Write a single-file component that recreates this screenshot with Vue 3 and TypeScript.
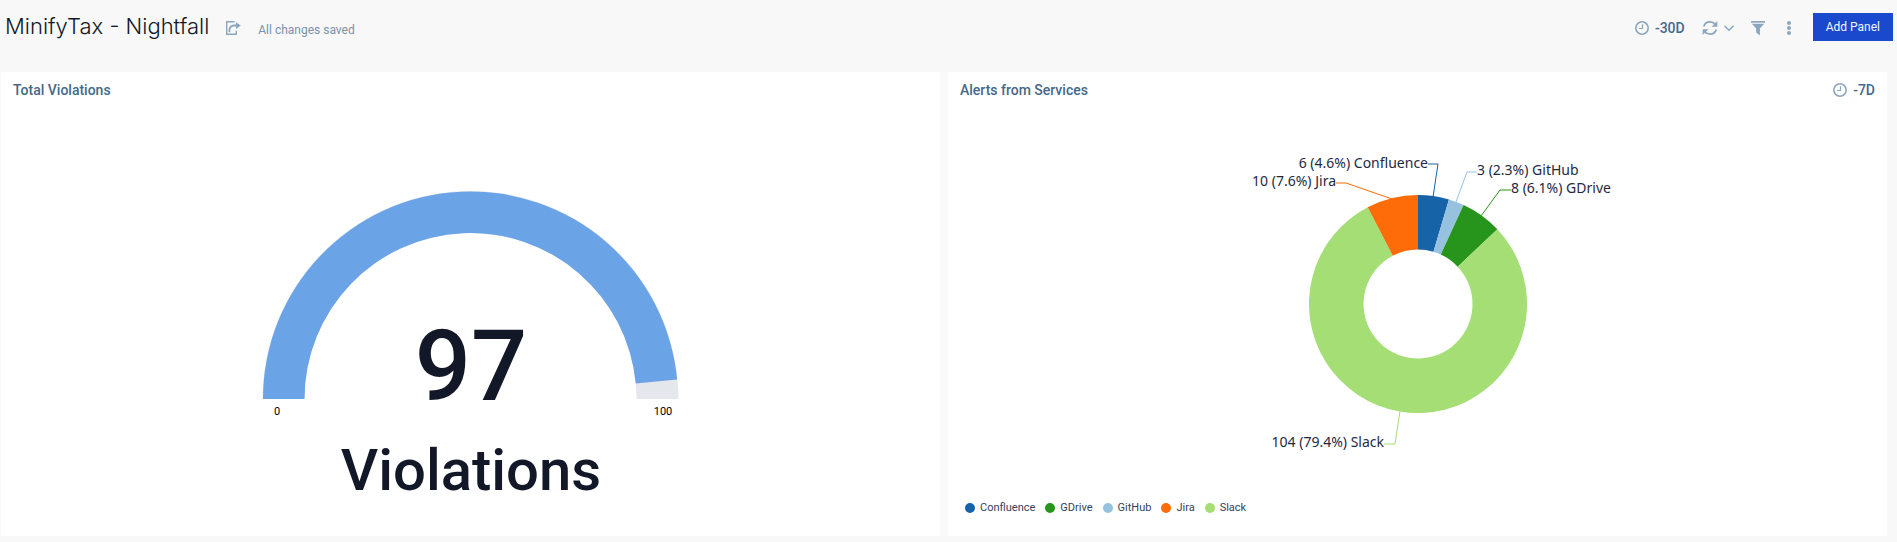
<script setup lang="ts">
interface Slice {
  name: string
  count: number
  color: string
  leader: string
  labelX: number
  labelY: number
  anchor: 'start' | 'end'
}

const gauge = { value: 97, max: 100, unit: 'Violations' }

const slices: Slice[] = [
  { name: 'Confluence', count: 6, color: '#1663a8', leader: '485,89 490,56 480,56', labelX: 480, labelY: 60, anchor: 'end' },
  { name: 'GitHub', count: 3, color: '#97c2df', leader: '508,94 519,64 529,64', labelX: 529, labelY: 67, anchor: 'start' },
  { name: 'GDrive', count: 8, color: '#27951b', leader: '533,108 552,82 563,82', labelX: 563, labelY: 85, anchor: 'start' },
  { name: 'Slack', count: 104, color: '#a4de75', leader: '452,303 447,336 436,336', labelX: 436, labelY: 339, anchor: 'end' },
  { name: 'Jira', count: 10, color: '#fd6c08', leader: '444,91 398,75 388,75', labelX: 388, labelY: 78, anchor: 'end' },
]

const total = slices.reduce((sum, s) => sum + s.count, 0)
const legend = [...slices].sort((a, b) => a.name.localeCompare(b.name))

/* Ring segment; angles are in degrees, clockwise from twelve o'clock. */
function ring(cx: number, cy: number, outer: number, inner: number, from: number, to: number): string {
  const point = (r: number, deg: number) => {
    const a = (deg * Math.PI) / 180
    return `${(cx + r * Math.sin(a)).toFixed(2)} ${(cy - r * Math.cos(a)).toFixed(2)}`
  }
  const large = to - from > 180 ? 1 : 0
  return `M${point(outer, from)}A${outer} ${outer} 0 ${large} 1 ${point(outer, to)}L${point(inner, to)}A${inner} ${inner} 0 ${large} 0 ${point(inner, from)}Z`
}

const gaugeTrack = ring(469.5, 291, 208, 166, -90, 90)
const gaugeFill = ring(469.5, 291, 207.5, 166, -90, -90 + (180 * gauge.value) / gauge.max)

let cursor = 0
const arcs = slices.map((s) => {
  const from = (cursor / total) * 360
  cursor += s.count
  return {
    ...s,
    path: ring(470, 196, 109, 54.5, from, (cursor / total) * 360),
    label: `${s.count} (${((s.count / total) * 100).toFixed(1)}%) ${s.name}`,
  }
})
</script>

<template>
  <div class="dashboard">
    <header class="topbar">
      <h1>MinifyTax - Nightfall</h1>
      <button class="icon-btn share" type="button" aria-label="Share">
        <svg width="16" height="16" viewBox="0 0 16 16" fill="none" stroke="currentColor" stroke-width="1.4">
          <path d="M9.5 1.7H1.7v12.6h9.6v-3.6" />
          <path d="M4.4 12.3V10.4c0-3 1.6-4.9 4.6-4.9h2.6" stroke-width="1.8" />
          <path d="M11 2.2L15.8 5.5 11 8.9z" fill="currentColor" stroke="none" />
        </svg>
      </button>
      <span class="status">All changes saved</span>

      <div class="tools">
        <button class="icon-btn range" type="button">
          <svg width="14" height="14" viewBox="0 0 14 14" fill="none" stroke="currentColor">
            <circle cx="7" cy="7" r="6.2" stroke-width="1.6" />
            <path d="M7.5 3.2v4.3H4" stroke-width="1.2" />
          </svg>
          <span>-30D</span>
        </button>
        <button class="icon-btn" type="button" aria-label="Refresh">
          <svg width="16" height="16" viewBox="0 0 16 16" fill="none" stroke="currentColor" stroke-width="1.8">
            <path d="M1.8 6.6C2.6 3.6 5 1.9 8 1.9c2.1 0 3.9.9 5.2 2.5" />
            <path d="M14.2 9.4C13.4 12.4 11 14.1 8 14.1c-2.1 0-3.9-.9-5.2-2.5" />
            <path d="M15.3 1v5.7H9.6z" fill="currentColor" stroke="none" />
            <path d="M.7 15V9.3h5.7z" fill="currentColor" stroke="none" />
          </svg>
          <svg width="10" height="10" viewBox="0 0 10 10" fill="none" stroke="currentColor" stroke-width="1.4">
            <path d="M.5 2.7L5 7.3 9.5 2.7" />
          </svg>
        </button>
        <button class="icon-btn" type="button" aria-label="Filter">
          <svg width="14" height="16" viewBox="0 0 14 16" fill="currentColor">
            <path d="M0 1h14v1.7H0z" />
            <path d="M.8 3.7h12.4L8.9 8.6v6.9L5.2 12.6V8.6z" />
          </svg>
        </button>
        <button class="icon-btn" type="button" aria-label="More actions">
          <svg width="14" height="14" viewBox="0 0 14 14" fill="currentColor">
            <circle cx="7" cy="2" r="2" />
            <circle cx="7" cy="7" r="2" />
            <circle cx="7" cy="12" r="2" />
          </svg>
        </button>
        <button class="primary" type="button">Add Panel</button>
      </div>
    </header>

    <main class="panels">
      <section class="panel">
        <header class="panel-head"><h2>Total Violations</h2></header>
        <svg class="chart" viewBox="0 0 939 428" role="img" aria-label="Violations gauge">
          <path :d="gaugeTrack" fill="#e4e7ec" />
          <path :d="gaugeFill" fill="#6ba3e7" />
          <text class="value" x="470" y="292">{{ gauge.value }}</text>
          <text class="unit" x="470" y="382">{{ gauge.unit }}</text>
          <text class="tick" x="276" y="307">0</text>
          <text class="tick" x="662" y="307">{{ gauge.max }}</text>
        </svg>
      </section>

      <section class="panel">
        <header class="panel-head">
          <h2>Alerts from Services</h2>
          <button class="icon-btn range" type="button">
            <svg width="14" height="14" viewBox="0 0 14 14" fill="none" stroke="currentColor">
              <circle cx="7" cy="7" r="6.2" stroke-width="1.6" />
              <path d="M7.5 3.2v4.3H4" stroke-width="1.2" />
            </svg>
            <span>-7D</span>
          </button>
        </header>
        <svg class="chart" viewBox="0 0 939 384" role="img" aria-label="Alerts by service">
          <g v-for="arc in arcs" :key="arc.name">
            <path :d="arc.path" :fill="arc.color" />
            <polyline :points="arc.leader" fill="none" :stroke="arc.color" />
            <text class="label" :x="arc.labelX" :y="arc.labelY" :text-anchor="arc.anchor">{{ arc.label }}</text>
          </g>
        </svg>
        <ul class="legend">
          <li v-for="item in legend" :key="item.name">
            <i class="dot" :style="{ backgroundColor: item.color }"></i>{{ item.name }}
          </li>
        </ul>
      </section>
    </main>
  </div>
</template>

<style>
body {
  background: #f8f8f8;
}
</style>

<style scoped>
.dashboard {
  padding-bottom: 6px;
  font-family: Roboto, "Liberation Sans", sans-serif;
  color: #121827;
}

.topbar {
  display: flex;
  align-items: center;
  height: 56px;
  padding: 0 4px 0 5px;
  margin-bottom: 16px;
}

h1 {
  margin: 0 16px 4px 0;
  font-family: Inter, Roboto, sans-serif;
  font-size: 22px;
  line-height: 28px;
  font-weight: 300;
}

.status {
  margin: 4px 0 0 17px;
  font-size: 12px;
  line-height: 16px;
  color: #7a92ab;
}

.tools {
  display: flex;
  align-items: center;
  gap: 17px;
  margin-left: auto;
}

button {
  border: 0;
  padding: 0;
  font-family: inherit;
  cursor: pointer;
}

.icon-btn {
  display: flex;
  align-items: center;
  gap: 6px;
  background: none;
  color: #8ba6bf;
}

.range span {
  font-size: 14px;
  line-height: 16px;
  font-weight: 500;
  color: #44698a;
}

.primary {
  height: 28px;
  margin-top: -2px;
  padding: 0 13px;
  background: #1a49cd;
  color: #f4f7ff;
  font-size: 12px;
  line-height: 16px;
}

.panels {
  display: grid;
  grid-template-columns: 1fr 1fr;
  gap: 8px;
  padding: 0 10px 0 1px;
}

.panel {
  background: #fff;
}

.panel-head {
  display: flex;
  align-items: center;
  justify-content: space-between;
  height: 36px;
  padding: 0 12px;
}

h2 {
  margin: 0;
  font-size: 14px;
  line-height: 20px;
  font-weight: 500;
  color: #44698a;
}

.chart {
  display: block;
  width: 100%;
  height: auto;
}

.value,
.unit,
.tick {
  text-anchor: middle;
  fill: #121827;
}

.value {
  font-size: 99px;
  font-weight: 500;
}

.unit {
  font-size: 58px;
  font-weight: 500;
}

.tick {
  font-size: 11px;
  fill: #000;
}

.label {
  font-family: "Noto Sans", sans-serif;
  font-size: 14px;
  fill: #1f2942;
}

.legend {
  display: flex;
  gap: 10px;
  height: 44px;
  margin: 0;
  padding: 0 17px;
  box-sizing: border-box;
  list-style: none;
  font-size: 11px;
  line-height: 32px;
  color: #34425f;
}

.legend li {
  display: flex;
  align-items: center;
  height: 32px;
  gap: 5px;
}

.dot {
  width: 10px;
  height: 10px;
  border-radius: 50%;
}
</style>
